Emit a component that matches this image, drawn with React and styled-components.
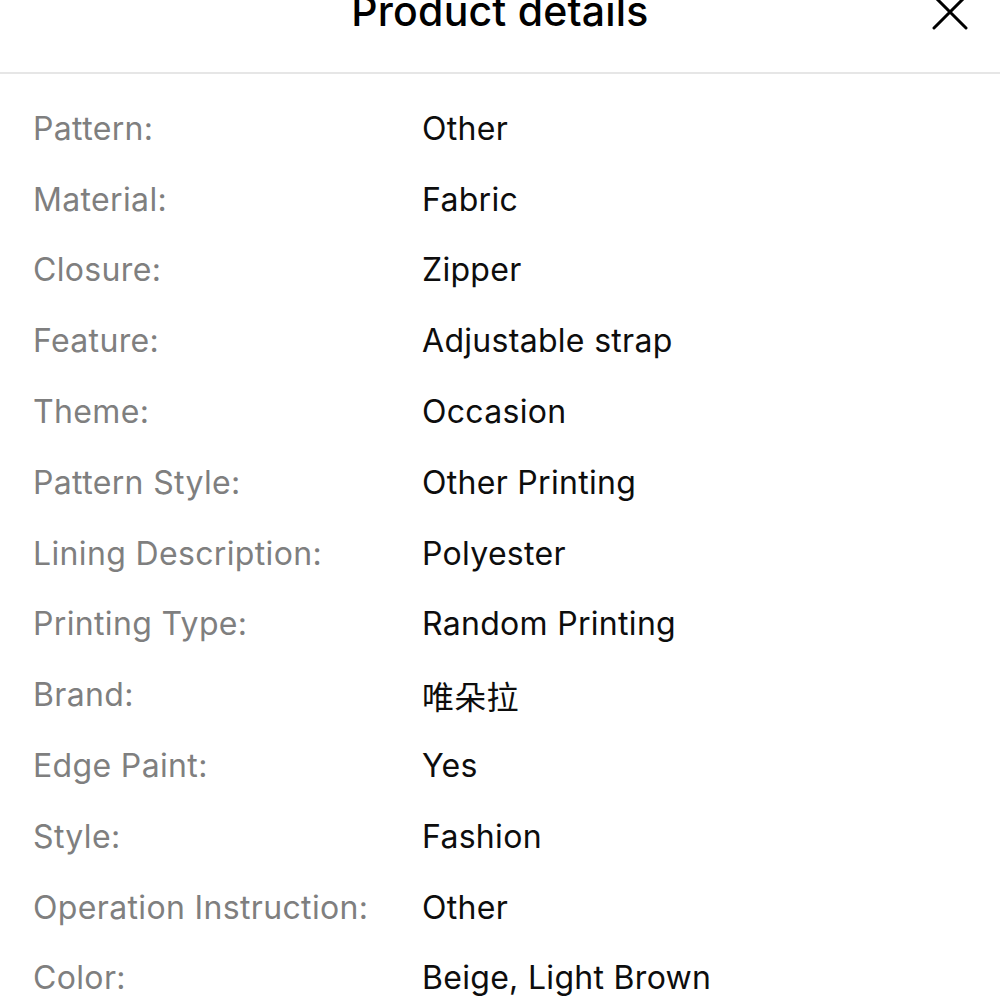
import React from "react";
import styled, { createGlobalStyle } from "styled-components";

const Global = createGlobalStyle`
  html, body { margin: 0; padding: 0; background: #fff; }
  body { font-family: Inter, "Noto Sans", "Noto Sans CJK SC", sans-serif; -webkit-font-smoothing: antialiased; }
`;

const Sheet = styled.div`
  width: 1000px;
  height: 1000px;
  overflow: hidden;
  background: #fff;
`;

const Header = styled.header`
  position: relative;
  height: 74px;
  border-bottom: 2px solid #e6e6e6;
  box-sizing: border-box;
  display: flex;
  justify-content: center;
  align-items: flex-start;
`;

const Title = styled.h1`
  margin: -11px 0 0;
  font-size: 41px;
  line-height: 44px;
  font-weight: 500;
  letter-spacing: 0.2px;
  color: #000;
`;

const Close = styled.button`
  position: absolute;
  right: 32px;
  top: -6px;
  width: 36px;
  height: 36px;
  padding: 0;
  border: 0;
  background: none;
  display: flex;
  align-items: center;
  justify-content: center;
`;

const List = styled.dl`
  margin: 0;
  padding: 19px 0 0 33px;
  display: grid;
  grid-template-columns: 389px 1fr;
  grid-auto-rows: 70.8px;
  align-items: center;
`;

const Label = styled.dt`
  font-size: 32px;
  letter-spacing: 0.35px;
  color: #7f7f7f;
`;

const Value = styled.dd`
  margin: 0;
  font-size: 32px;
  letter-spacing: 0.3px;
  color: #0d0d0d;
`;

const rows = [
  ["Pattern:", "Other"],
  ["Material:", "Fabric"],
  ["Closure:", "Zipper"],
  ["Feature:", "Adjustable strap"],
  ["Theme:", "Occasion"],
  ["Pattern Style:", "Other Printing"],
  ["Lining Description:", "Polyester"],
  ["Printing Type:", "Random Printing"],
  ["Brand:", "唯朵拉"],
  ["Edge Paint:", "Yes"],
  ["Style:", "Fashion"],
  ["Operation Instruction:", "Other"],
  ["Color:", "Beige, Light Brown"],
];

export default function App() {
  return (
    <Sheet>
      <Global />
      <Header>
        <Title>Product details</Title>
        <Close aria-label="Close">
          <svg width="36" height="36" viewBox="0 0 36 36" fill="none" stroke="#000" strokeWidth="3" strokeLinecap="round">
            <path d="M2 2L34 34M34 2L2 34" />
          </svg>
        </Close>
      </Header>
      <List>
        {rows.map(([k, v]) => (
          <React.Fragment key={k}>
            <Label>{k}</Label>
            <Value>{v}</Value>
          </React.Fragment>
        ))}
      </List>
    </Sheet>
  );
}
